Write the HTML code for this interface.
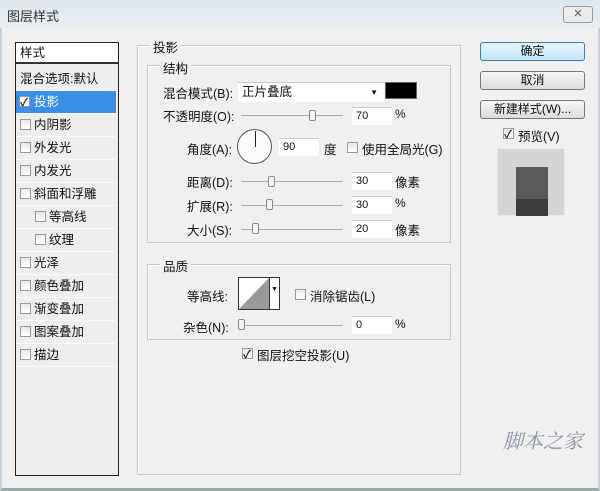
<!DOCTYPE html><html><head><meta charset="utf-8"><style>
*{margin:0;padding:0;box-sizing:border-box}
body{width:600px;height:491px;overflow:hidden;background:#f0f0f0;font-family:"Liberation Sans","Noto Sans CJK SC",sans-serif;font-size:12px;color:#111;position:relative}
.a{position:absolute;white-space:nowrap}
.cb{position:absolute;width:11px;height:11px;border:1px solid #999;background:linear-gradient(#e8e8e8,#fff)}
.cb.on::after{content:"✓";position:absolute;left:0;top:-3px;font-size:11px;color:#223;font-weight:bold}
.item{position:absolute;left:1px;width:100px;height:23px;border-bottom:1px solid #fafafa;line-height:22px;font-size:12.5px}
.inp{position:absolute;height:18px;background:#fff;border-top:1px solid #ccc;line-height:17px;padding-left:4px;font-size:11px}
.sl{position:absolute;height:1px;background:#aaa}
.th{position:absolute;width:7px;height:11px;border:1px solid #888;border-radius:2px;background:#f4f4f4}
.btn{position:absolute;left:480px;width:105px;height:19px;border:1px solid #777;border-radius:3px;background:linear-gradient(#f6f6f6,#dcdcdc);text-align:center;line-height:17px;font-size:12px}
.grp{position:absolute;border:1px solid #c8c8c8;box-shadow:inset 1px 1px #fff}
.lg{position:absolute;background:#f0f0f0;padding:0 3px;font-size:12.5px}
</style></head><body>
<div class="a" style="left:0;top:0;width:600px;height:28px;background:linear-gradient(#dde6ee,#e9eef3)"></div>
<div class="a" style="left:7px;top:6px;font-size:13px;color:#333">图层样式</div>
<div class="a" style="left:563px;top:6px;width:30px;height:17px;border:1px solid #999;border-radius:3px;background:#e8ecef;text-align:center;font-size:11px;line-height:14px;color:#555">✕</div>
<div class="a" style="left:0;top:28px;width:600px;height:463px;border-left:2px solid #c9d3dc;border-right:2px solid #c9d3dc;border-bottom:3px solid #9aa"></div>

<div class="a" style="left:15px;top:42px;width:104px;height:434px;border:1px solid #222;background:#eeeeee"></div>
<div class="a" style="left:16px;top:43px;width:102px;height:21px;background:#fff;border-bottom:2px solid #333;padding-left:4px;line-height:21px;font-size:12.5px">样式</div>
<div class="item" style="left:16px;top:68px;padding-left:4px">混合选项:默认</div>
<div class="item" style="left:16px;top:91px;background:#3a8ee6;color:#fff;padding-left:18px">投影</div>
<div class="cb on" style="left:19px;top:96px;background:#fff"></div>
<div class="item" style="left:16px;top:114px;padding-left:18px">内阴影</div><div class="cb" style="left:20px;top:119px"></div>
<div class="item" style="left:16px;top:137px;padding-left:18px">外发光</div><div class="cb" style="left:20px;top:142px"></div>
<div class="item" style="left:16px;top:160px;padding-left:18px">内发光</div><div class="cb" style="left:20px;top:165px"></div>
<div class="item" style="left:16px;top:183px;padding-left:18px">斜面和浮雕</div><div class="cb" style="left:20px;top:188px"></div>
<div class="item" style="left:16px;top:206px;padding-left:33px">等高线</div><div class="cb" style="left:35px;top:211px"></div>
<div class="item" style="left:16px;top:229px;padding-left:33px">纹理</div><div class="cb" style="left:35px;top:234px"></div>
<div class="item" style="left:16px;top:252px;padding-left:18px">光泽</div><div class="cb" style="left:20px;top:257px"></div>
<div class="item" style="left:16px;top:275px;padding-left:18px">颜色叠加</div><div class="cb" style="left:20px;top:280px"></div>
<div class="item" style="left:16px;top:298px;padding-left:18px">渐变叠加</div><div class="cb" style="left:20px;top:303px"></div>
<div class="item" style="left:16px;top:321px;padding-left:18px">图案叠加</div><div class="cb" style="left:20px;top:326px"></div>
<div class="item" style="left:16px;top:344px;padding-left:18px">描边</div><div class="cb" style="left:20px;top:349px"></div>

<div class="grp" style="left:137px;top:45px;width:324px;height:430px"></div>
<div class="lg" style="left:150px;top:37px">投影</div>
<div class="grp" style="left:147px;top:65px;width:304px;height:178px"></div>
<div class="lg" style="left:160px;top:58px">结构</div>
<div class="a" style="left:163px;top:83px;font-size:12.5px">混合模式(B):</div>
<div class="inp" style="left:238px;top:82px;width:146px;height:20px;font-size:12.5px;line-height:19px">正片叠底<span style="position:absolute;right:6px;font-size:8px">▼</span></div>
<div class="a" style="left:385px;top:82px;width:32px;height:17px;background:#000;border:1px solid #666"></div>
<div class="a" style="left:163px;top:106px;font-size:12.5px">不透明度(O):</div>
<div class="sl" style="left:241px;top:115px;width:102px"></div><div class="th" style="left:309px;top:110px"></div>
<div class="inp" style="left:352px;top:107px;width:40px">70</div><div class="a" style="left:395px;top:107px">%</div>
<div class="a" style="left:187px;top:139px;font-size:12.5px">角度(A):</div>
<div class="a" style="left:237px;top:129px;width:35px;height:35px;border:1px solid #555;border-radius:50%;background:#fafafa"></div>
<div class="a" style="left:255px;top:131px;width:1px;height:16px;background:#222"></div>
<div class="inp" style="left:279px;top:138px;width:40px">90</div><div class="a" style="left:324px;top:139px;font-size:12.5px">度</div>
<div class="cb" style="left:347px;top:142px"></div><div class="a" style="left:362px;top:139px;font-size:12.5px">使用全局光(G)</div>
<div class="a" style="left:187px;top:172px;font-size:12.5px">距离(D):</div>
<div class="sl" style="left:241px;top:181px;width:102px"></div><div class="th" style="left:268px;top:176px"></div>
<div class="inp" style="left:352px;top:172px;width:40px">30</div><div class="a" style="left:395px;top:172px;font-size:12.5px">像素</div>
<div class="a" style="left:187px;top:196px;font-size:12.5px">扩展(R):</div>
<div class="sl" style="left:241px;top:205px;width:102px"></div><div class="th" style="left:266px;top:199px"></div>
<div class="inp" style="left:352px;top:196px;width:40px">30</div><div class="a" style="left:395px;top:196px">%</div>
<div class="a" style="left:187px;top:220px;font-size:12.5px">大小(S):</div>
<div class="sl" style="left:241px;top:229px;width:102px"></div><div class="th" style="left:252px;top:223px"></div>
<div class="inp" style="left:352px;top:220px;width:40px">20</div><div class="a" style="left:395px;top:220px;font-size:12.5px">像素</div>

<div class="grp" style="left:147px;top:264px;width:304px;height:76px"></div>
<div class="lg" style="left:160px;top:256px">品质</div>
<div class="a" style="left:187px;top:286px;font-size:12.5px">等高线:</div>
<div class="a" style="left:238px;top:277px;width:42px;height:33px;border:1px solid #333;background:#fff"><svg width="30" height="31" style="position:absolute;left:0;top:0"><polygon points="0,31 30,0 30,31" fill="#999"/></svg><div style="position:absolute;left:30px;top:0;width:1px;height:31px;background:#333"></div><div style="position:absolute;left:32px;top:8px;font-size:7px">▼</div></div>
<div class="cb" style="left:295px;top:289px"></div><div class="a" style="left:310px;top:286px;font-size:12.5px">消除锯齿(L)</div>
<div class="a" style="left:183px;top:317px;font-size:12.5px">杂色(N):</div>
<div class="sl" style="left:239px;top:325px;width:104px"></div><div class="th" style="left:238px;top:319px"></div>
<div class="inp" style="left:352px;top:316px;width:40px">0</div><div class="a" style="left:395px;top:317px">%</div>
<div class="cb on" style="left:242px;top:348px"></div><div class="a" style="left:257px;top:345px;font-size:12.5px">图层挖空投影(U)</div>

<div class="btn" style="top:42px;border-color:#3c7fb1;background:linear-gradient(#e6f6fd,#bfe6f7)">确定</div>
<div class="btn" style="top:71px">取消</div>
<div class="btn" style="top:100px">新建样式(W)...</div>
<div class="cb on" style="left:503px;top:128px"></div><div class="a" style="left:518px;top:126px;font-size:12.5px">预览(V)</div>
<div class="a" style="left:497px;top:148px;width:68px;height:68px;background:#d4d4d4;border:1px solid #e8e8e8"></div>
<div class="a" style="left:516px;top:167px;width:32px;height:49px;background:linear-gradient(#5a5a5a 0,#5a5a5a 65%,#3c3c3c 65%)"></div>
<div class="a" style="left:503px;top:425px;font-family:'Liberation Serif','Noto Serif CJK SC',serif;font-style:italic;font-size:20px;color:#8a92a8">脚本之家</div>
</body></html>
